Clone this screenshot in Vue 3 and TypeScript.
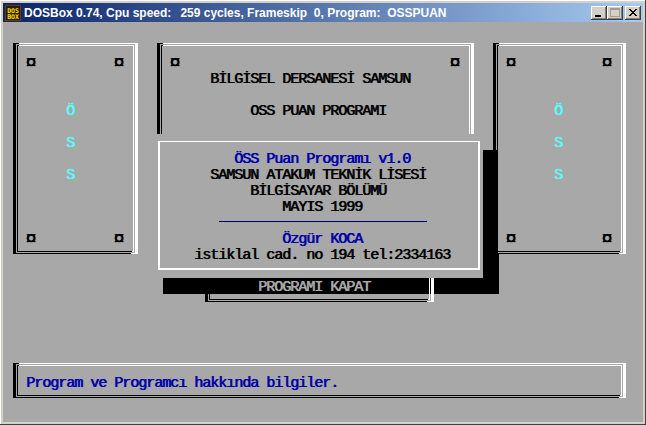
<script setup lang="ts">
// 80x25 text-mode screen: every item sits on a character cell (8x16)
interface Cell {
  text: string
  col: number
  row: number
  tone?: string
}

const panels = [
  { name: 'left', col: 1, row: 1, cols: 16, rows: 14 },
  { name: 'middle', col: 19, row: 1, cols: 40, rows: 6 },
  { name: 'right', col: 61, row: 1, cols: 17, rows: 14 },
  { name: 'status', col: 1, row: 21, cols: 77, rows: 3 },
]

const cells: Cell[] = [
  { text: '¤', col: 3, row: 2, tone: 'mark' },
  { text: '¤', col: 14, row: 2, tone: 'mark' },
  { text: '¤', col: 3, row: 13, tone: 'mark' },
  { text: '¤', col: 14, row: 13, tone: 'mark' },
  { text: 'Ö', col: 8, row: 5, tone: 'cyan' },
  { text: 'S', col: 8, row: 7, tone: 'cyan' },
  { text: 'S', col: 8, row: 9, tone: 'cyan' },
  { text: '¤', col: 21, row: 2, tone: 'mark' },
  { text: '¤', col: 56, row: 2, tone: 'mark' },
  { text: 'BİLGİSEL DERSANESİ SAMSUN', col: 26, row: 3 },
  { text: 'OSS PUAN PROGRAMI', col: 31, row: 5 },
  { text: '¤', col: 63, row: 2, tone: 'mark' },
  { text: '¤', col: 75, row: 2, tone: 'mark' },
  { text: '¤', col: 63, row: 13, tone: 'mark' },
  { text: '¤', col: 75, row: 13, tone: 'mark' },
  { text: 'Ö', col: 69, row: 5, tone: 'cyan' },
  { text: 'S', col: 69, row: 7, tone: 'cyan' },
  { text: 'S', col: 69, row: 9, tone: 'cyan' },
  { text: 'Program ve Programcı hakkında bilgiler.', col: 3, row: 22, tone: 'blue' },
]

const dialogCells: Cell[] = [
  { text: 'ÖSS Puan Programı v1.0', col: 29, row: 8, tone: 'blue' },
  { text: 'SAMSUN ATAKUM TEKNİK LİSESİ', col: 26, row: 9 },
  { text: 'BİLGİSAYAR BÖLÜMÜ', col: 31, row: 10 },
  { text: 'MAYIS 1999', col: 35, row: 11 },
  { text: 'Özgür KOCA', col: 35, row: 13, tone: 'blue' },
  { text: 'istiklal cad. no 194 tel:2334163', col: 24, row: 14 },
]

const cycles = '259 cycles, Frameskip  0, Program:  OSSPUAN'

function place(col: number, row: number, cols = 0, rows = 1) {
  return {
    gridColumn: cols ? `${col + 1} / span ${cols}` : `${col + 1} / span 60`,
    gridRow: `${row + 1} / span ${rows}`,
  }
}
</script>
<template>
  <div class="window">
    <div class="titlebar">
      <svg class="logo" width="16" height="16" viewBox="0 0 16 16">
        <rect width="16" height="16" fill="#6b3c08" />
        <rect x="1" y="1" width="14" height="14" fill="#2e1a04" />
        <text x="8" y="7.5" class="logo-text">DOS</text>
        <text x="8" y="14" class="logo-text">BOX</text>
      </svg>
      <span class="caption">DOSBox 0.74, Cpu speed:</span>
      <span class="caption caption--cycles">{{ cycles }}</span>
      <div class="buttons">
        <button class="btn">
          <svg width="16" height="14" viewBox="0 0 16 14"><rect x="4" y="9" width="6" height="2" fill="#000" /></svg>
        </button>
        <button class="btn">
          <svg width="16" height="14" viewBox="0 0 16 14"><rect x="3.5" y="2.5" width="9" height="8" fill="none" stroke="#a09c94" /><rect x="3" y="2" width="10" height="2" fill="#a09c94" /></svg>
        </button>
        <button class="btn btn--close">
          <svg width="16" height="14" viewBox="0 0 16 14"><path d="M4 3l7 7M5 3l7 7M11 3l-7 7M12 3l-7 7" stroke="#000" fill="none" /></svg>
        </button>
      </div>
    </div>
    <div class="screen">
      <div
        v-for="p in panels"
        :key="p.name"
        class="panel"
        :class="`panel--${p.name}`"
        :style="place(p.col, p.row, p.cols, p.rows)"
      >
        <div class="panel__inner"></div>
      </div>
      <span
        v-for="c in cells"
        :key="`${c.col}-${c.row}`"
        class="cell"
        :class="c.tone"
        :style="place(c.col, c.row)"
      >{{ c.text }}</span>

      <div class="shadow"></div>
      <div class="shadow-lines"></div>
      <div class="dialog"></div>
      <div class="dialog-frame"></div>
      <span
        v-for="c in dialogCells"
        :key="c.text"
        class="cell"
        :class="c.tone"
        :style="place(c.col, c.row)"
      >{{ c.text }}</span>
      <div class="rule"></div>
      <div class="panel panel--close" :style="place(25, 16, 29, 2)">
        <div class="panel__inner"></div>
      </div>
      <div class="btn-lines btn-lines--left"></div>
      <div class="btn-lines btn-lines--right"></div>
      <span class="cell cell--btn" :style="place(32, 16)">PROGRAMI KAPAT</span>
    </div>
  </div>
</template>
<style>
html,
body {
  margin: 0;
  background: #d4d0c8;
  overflow: hidden;
}
</style>
<style scoped>
.window {
  width: 646px;
  height: 425px;
  box-sizing: border-box;
  padding: 3px;
  background: #d4d0c8;
  box-shadow: inset -1px -1px 0 #404040, inset 1px 1px 0 #fff;
  font-family: "Liberation Sans", sans-serif;
}
.titlebar {
  height: 19px;
  display: flex;
  align-items: center;
  padding-left: 2px;
  background: linear-gradient(90deg, #0a246a, #a6caf0);
  color: #fff;
  font-size: 12px;
  font-weight: 700;
  white-space: pre;
}
.logo {
  flex: none;
  margin-right: 3px;
}
.logo-text {
  font-family: "DejaVu Sans Mono", monospace;
  font-size: 6.5px;
  font-weight: 700;
  fill: #ffe000;
  text-anchor: middle;
}
.caption--cycles {
  margin-left: 9px;
}
.buttons {
  margin-left: auto;
  margin-right: 2px;
  display: flex;
}
.btn {
  width: 16px;
  height: 14px;
  padding: 0;
  border: 0;
  background: #d4d0c8;
  box-shadow: inset -1px -1px 0 #404040, inset 1px 1px 0 #fff, inset -2px -2px 0 #808080;
  display: block;
}
.btn svg {
  display: block;
}
.btn--close {
  margin-left: 2px;
}
.screen {
  width: 640px;
  height: 400px;
  background: #a8a8a8;
  display: grid;
  grid-template-columns: repeat(80, 8px);
  grid-template-rows: repeat(25, 16px);
  font-family: "Liberation Mono", monospace;
  font-size: 15px;
  letter-spacing: -1px;
  color: #000;
}
.cell {
  line-height: 20px;
  white-space: pre;
  margin-left: -1px;
  text-shadow: 0.8px 0 0 currentColor;
}
.cyan {
  color: #55ffff;
}
.blue {
  color: #0000a8;
}
.mark {
  font-size: 19px;
  line-height: 19px;
  margin-left: -2px;
  color: #000;
}
.panel {
  box-sizing: border-box;
  margin: 5px 1px 8px 2px;
  padding: 1px;
  border-style: solid;
  border-width: 1px 3px;
  border-color: #fff #fff #000 #000;
  position: relative;
}
.panel__inner {
  box-sizing: border-box;
  height: 100%;
  border-style: solid;
  border-width: 1px;
  border-color: #fff #fff #000 #000;
  position: relative;
}
/* corner pixels where the black and white double lines meet */
.panel::before,
.panel__inner::before {
  content: "";
  position: absolute;
  top: -1px;
  left: -3px;
  width: 6px;
  height: 1px;
  background: #000;
}
.panel__inner::before {
  left: -1px;
  width: 2px;
}
.panel::after,
.panel__inner::after {
  content: "";
  position: absolute;
  right: -3px;
  bottom: -1px;
  width: 7px;
  height: 1px;
  background: #fff;
}
.panel__inner::after {
  right: -1px;
  width: 2px;
}
.panel--middle {
  margin-bottom: 0;
  border-bottom: 0;
  padding-bottom: 0;
}
.panel--middle .panel__inner {
  border-bottom: 0;
}
.panel--middle::after,
.panel--middle .panel__inner::after {
  display: none;
}
.panel--close {
  margin-top: 0;
  border-top: 0;
  padding-top: 0;
}
.panel--close .panel__inner {
  border-top: 0;
}
.panel--close::before,
.panel--close .panel__inner::before {
  display: none;
}
.shadow {
  grid-column: 21 / 63;
  grid-row: 9 / 18;
  background: #000;
}
.shadow-lines {
  grid-column: 62 / 63;
  grid-row: 9 / 16;
  margin: 0 0 8px 3px;
  box-sizing: border-box;
  width: 5px;
  border-style: solid;
  border-width: 0 1px 1px 2px;
  border-color: #a8a8a8;
}
.dialog {
  grid-column: 20 / 61;
  grid-row: 8 / 17;
  background: #a8a8a8;
}
.dialog-frame {
  grid-column: 20 / 61;
  grid-row: 8 / 17;
  margin: 7px 3px 8px 3px;
  border: 2px solid #fff;
  border-width: 1px 2px 2px 2px;
}
.rule {
  grid-column: 28 / span 26;
  grid-row: 13;
  margin-top: 7px;
  height: 1px;
  background: #00006a;
}
.btn-lines {
  grid-row: 17;
  box-sizing: border-box;
  width: 5px;
  border-style: solid;
  border-color: #a8a8a8;
}
.btn-lines--left {
  grid-column: 26;
  margin-left: 2px;
  border-width: 0 1px 0 3px;
}
.btn-lines--right {
  grid-column: 54;
  margin-left: 2px;
  border-width: 0 3px 0 1px;
}
.cell--btn {
  color: #a8a8a8;
}
</style>
